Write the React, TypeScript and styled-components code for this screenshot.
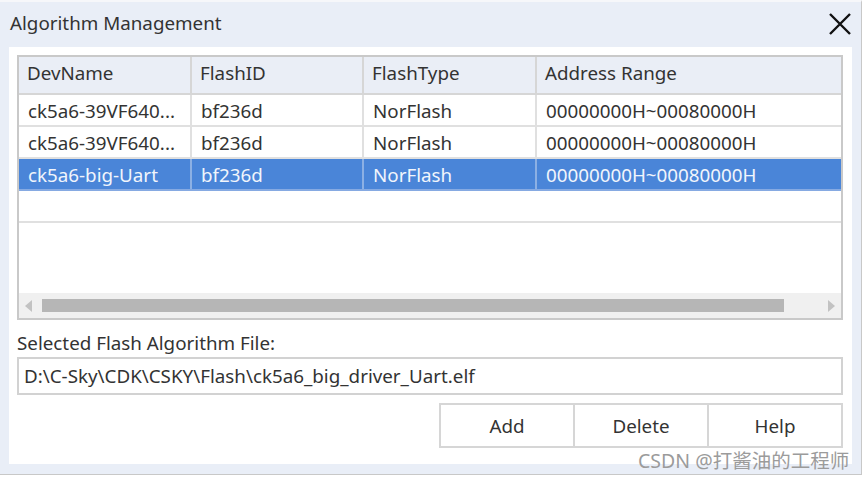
import React from 'react';
import styled, { createGlobalStyle } from 'styled-components';

const GlobalStyle = createGlobalStyle`
  html, body {
    margin: 0;
    padding: 0;
    background: #ffffff;
  }
  body {
    font-family: "Noto Sans", "Noto Sans CJK SC", sans-serif;
    color: #333333;
  }
`;

const Dialog = styled.div`
  position: relative;
  width: 862px;
  height: 475px;
  background: #e9eef7;
  border-top: 2px solid #f6f7fa;
  border-right: 1px solid #c8c8c8;
  border-bottom: 1px solid #c8c8c8;
  box-sizing: border-box;
  display: flex;
  flex-direction: column;
`;

const TitleBar = styled.div`
  height: 45px;
  display: flex;
  align-items: center;
  justify-content: space-between;
  padding: 0 9px 0 10px;
  box-sizing: border-box;
`;

const Title = styled.div`
  font-size: 18.8px;
  color: #333;
  margin-top: -3px;
`;

const CloseButton = styled.div`
  width: 24px;
  height: 24px;
  margin-top: -1px;
  display: flex;
  align-items: center;
  justify-content: center;
`;

const Panel = styled.div`
  background: #ffffff;
  margin: 0 9px 0 9px;
  height: 417px;
  padding: 8px 9px 0 8px;
  box-sizing: border-box;
  display: flex;
  flex-direction: column;
`;

const Grid = styled.div`
  border: 2px solid #c9c9c9;
  height: 265px;
  box-sizing: border-box;
  display: flex;
  flex-direction: column;
`;

const cols = '173px 172px 173px 1fr';

const HeaderRow = styled.div`
  display: grid;
  grid-template-columns: ${cols};
  height: 38px;
  background: #eaeef6;
  border-bottom: 2px solid #d6d6d6;
  box-sizing: border-box;
`;

const HeaderCell = styled.div`
  display: flex;
  align-items: center;
  padding: 0 0 5px 8px;
  font-size: 18.8px;
  color: #333;
  border-right: 2px solid #d6d6d6;
  &:last-child {
    border-right: none;
  }
`;

const Row = styled.div<{ $selected?: boolean }>`
  display: grid;
  grid-template-columns: ${cols};
  height: 32px;
  box-sizing: border-box;
  background: ${(p) => (p.$selected ? '#4a85d8' : '#ffffff')};
  border-bottom: 2px solid ${(p) => (p.$selected ? '#86aae2' : '#e0e0e0')};
  color: ${(p) => (p.$selected ? '#f1f5fc' : '#333')};
`;

const Cell = styled.div<{ $selected?: boolean }>`
  display: flex;
  align-items: center;
  padding: 2px 0 0 9px;
  font-size: 18.8px;
  white-space: nowrap;
  overflow: hidden;
  border-right: 2px solid ${(p) => (p.$selected ? '#8cb0e4' : '#e0e0e0')};
  &:last-child {
    border-right: none;
  }
`;

const EmptyRow = styled.div`
  height: 32px;
  box-sizing: border-box;
  border-bottom: 2px solid #e0e0e0;
`;

const Filler = styled.div`
  flex: 1;
`;

const ScrollBar = styled.div`
  height: 25px;
  background: #f0f0f0;
  display: flex;
  align-items: center;
  padding: 0 6px;
  gap: 10px;
`;

const Thumb = styled.div`
  flex: 1;
  height: 13px;
  background: #b6b6b6;
  margin-right: 34px;
`;

const Arrow = styled.div<{ $dir: 'left' | 'right' }>`
  width: 0;
  height: 0;
  border-top: 6px solid transparent;
  border-bottom: 6px solid transparent;
  ${(p) =>
    p.$dir === 'left'
      ? 'border-right: 7px solid #c2c2c2;'
      : 'border-left: 7px solid #c2c2c2;'}
`;

const Label = styled.div`
  font-size: 18.8px;
  color: #333;
  margin-top: 10px;
  height: 26px;
  line-height: 26px;
`;

const PathBox = styled.div`
  height: 38px;
  border: 2px solid #d2d2d2;
  box-sizing: border-box;
  display: flex;
  align-items: center;
  padding-left: 5px;
  font-size: 18.8px;
  color: #333;
  margin-top: 1px;
`;

const ButtonRow = styled.div`
  display: flex;
  justify-content: flex-end;
  margin-top: 8px;
`;

const Button = styled.div`
  width: 136px;
  height: 45px;
  box-sizing: border-box;
  border: 2px solid #d6d6d6;
  margin-left: -2px;
  display: flex;
  align-items: center;
  justify-content: center;
  font-size: 18.8px;
  color: #333;
  background: #fff;
`;

const Watermark = styled.div`
  position: absolute;
  left: 638px;
  top: 443px;
  font-size: 19.5px;
  color: #9b9b9b;
  white-space: nowrap;
`;

const rows = [
  { name: 'ck5a6-39VF640...', id: 'bf236d', type: 'NorFlash', range: '00000000H~00080000H' },
  { name: 'ck5a6-39VF640...', id: 'bf236d', type: 'NorFlash', range: '00000000H~00080000H' },
  { name: 'ck5a6-big-Uart', id: 'bf236d', type: 'NorFlash', range: '00000000H~00080000H', selected: true },
];

export default function App() {
  return (
    <>
      <GlobalStyle />
      <Dialog>
        <TitleBar>
          <Title>Algorithm Management</Title>
          <CloseButton>
            <svg width="22" height="22" viewBox="0 0 22 22">
              <path d="M1 1 L21 21 M21 1 L1 21" stroke="#111" strokeWidth="2.4" />
            </svg>
          </CloseButton>
        </TitleBar>
        <Panel>
          <Grid>
            <HeaderRow>
              <HeaderCell>DevName</HeaderCell>
              <HeaderCell>FlashID</HeaderCell>
              <HeaderCell>FlashType</HeaderCell>
              <HeaderCell>Address Range</HeaderCell>
            </HeaderRow>
            {rows.map((r, i) => (
              <Row key={i} $selected={r.selected}>
                <Cell $selected={r.selected}>{r.name}</Cell>
                <Cell $selected={r.selected}>{r.id}</Cell>
                <Cell $selected={r.selected}>{r.type}</Cell>
                <Cell $selected={r.selected}>{r.range}</Cell>
              </Row>
            ))}
            <EmptyRow />
            <Filler />
            <ScrollBar>
              <Arrow $dir="left" />
              <Thumb />
              <Arrow $dir="right" />
            </ScrollBar>
          </Grid>
          <Label>Selected Flash Algorithm File:</Label>
          <PathBox>D:\C-Sky\CDK\CSKY\Flash\ck5a6_big_driver_Uart.elf</PathBox>
          <ButtonRow>
            <Button>Add</Button>
            <Button>Delete</Button>
            <Button>Help</Button>
          </ButtonRow>
        </Panel>
        <Watermark>CSDN @打酱油的工程师</Watermark>
      </Dialog>
    </>
  );
}
